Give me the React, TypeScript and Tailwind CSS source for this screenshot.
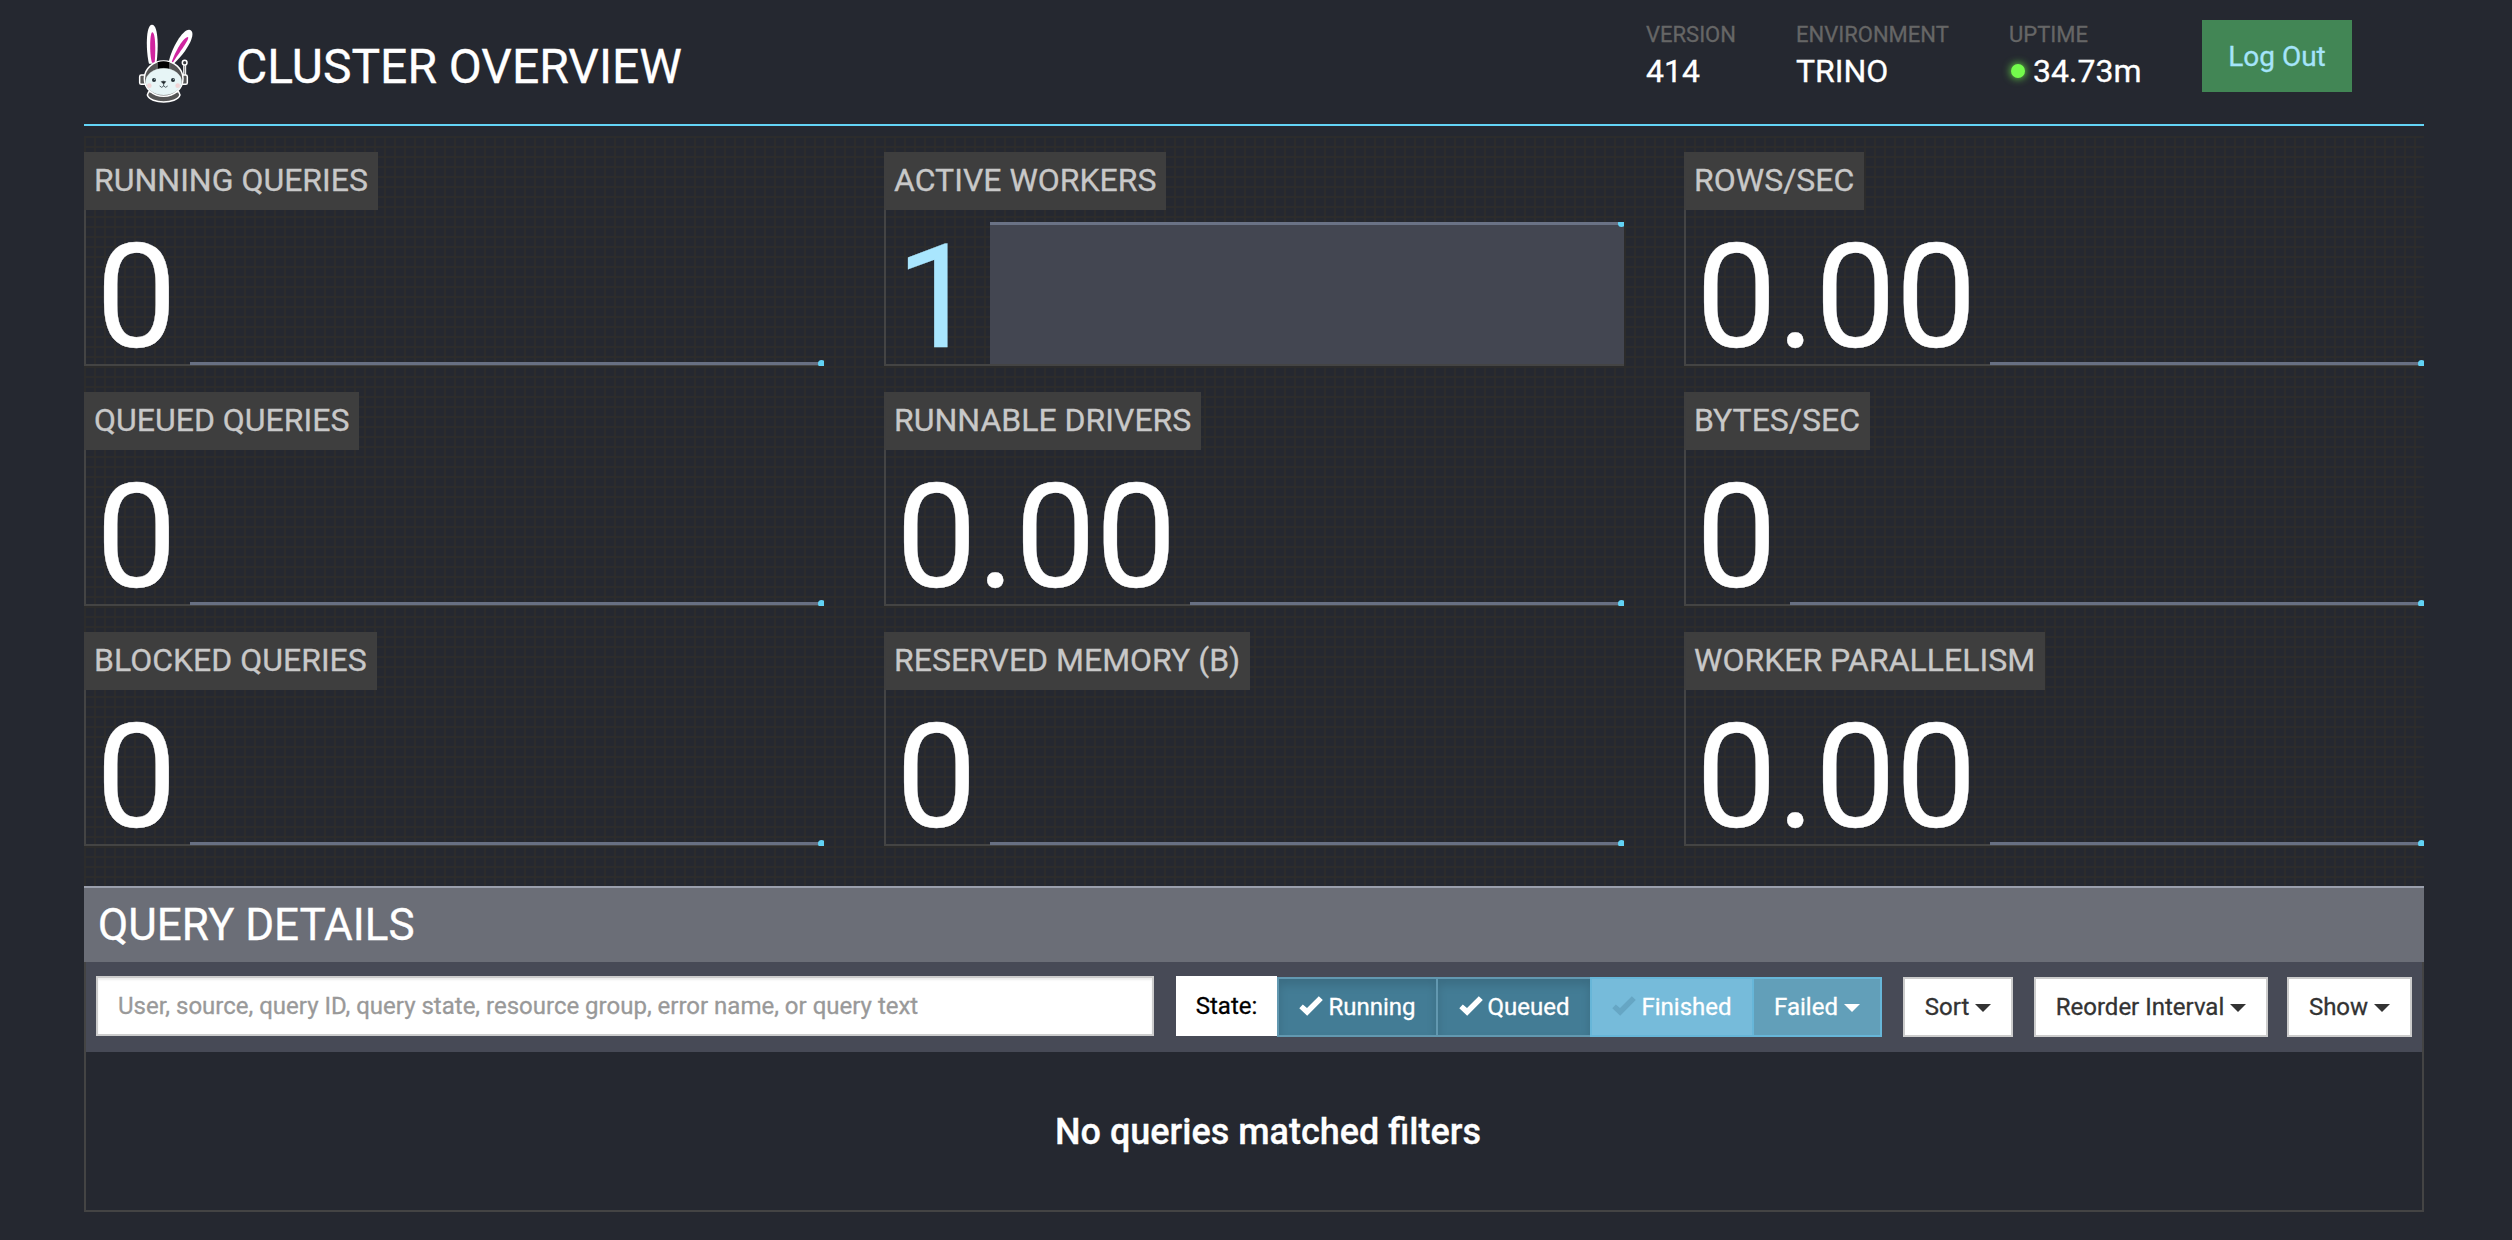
import React from "react";

type Stat = { label: string; value: string; full?: boolean };

const STATS: Stat[] = [
  { label: "RUNNING QUERIES", value: "0" },
  { label: "ACTIVE WORKERS", value: "1", full: true },
  { label: "ROWS/SEC", value: "0.00" },
  { label: "QUEUED QUERIES", value: "0" },
  { label: "RUNNABLE DRIVERS", value: "0.00" },
  { label: "BYTES/SEC", value: "0" },
  { label: "BLOCKED QUERIES", value: "0" },
  { label: "RESERVED MEMORY (B)", value: "0" },
  { label: "WORKER PARALLELISM", value: "0.00" },
];

function Logo() {
  return (
    <svg viewBox="0 0 210 285" className="h-[95px] w-[70px]" fill="none">
      <path d="M57 146C48 112 46 29 66 29C87 29 85 110 79 146Z" fill="#fff" />
      <path d="M66 143C58 120 59 52 67 52C77 52 77 112 74 143Z" fill="#d0259f" />
      <path d="M116 142C124 100 158 42 178 44C204 50 172 110 127 150Z" fill="#fff" />
      <path d="M125 142C136 110 160 66 174 66C180 72 148 112 128 144Z" fill="#d0259f" />
      <path d="M164 151V184" stroke="#fff" strokeWidth="9" />
      <path d="M164 151V184" stroke="#4a4a4a" strokeWidth="2" />
      <circle cx="164" cy="143" r="7" fill="#3a3b40" stroke="#fff" strokeWidth="4.5" />
      <rect x="29" y="180" width="18" height="28" rx="5" fill="#555" stroke="#fff" strokeWidth="4.5" />
      <rect x="154" y="180" width="18" height="28" rx="5" fill="#555" stroke="#fff" strokeWidth="4.5" />
      <path d="M56 230L52 240C62 268 140 268 150 240L146 230Z" fill="#555" stroke="#fff" strokeWidth="4.5" strokeLinejoin="round" />
      <ellipse cx="101" cy="191" rx="58" ry="53" fill="#555" stroke="#fff" strokeWidth="4.5" />
      <path d="M82 142Q100 136 119 142V164H82Z" fill="#000" />
      <path d="M82 141V162M119 141V162" stroke="#aaa" strokeWidth="1.5" />
      <ellipse cx="101" cy="200" rx="54" ry="40" fill="#e7f5f6" stroke="#dfe7e8" strokeWidth="1" />
      <circle cx="58" cy="212" r="7" fill="#f0d5d6" />
      <circle cx="143" cy="212" r="7" fill="#f0d5d6" />
      <circle cx="72" cy="195" r="6" fill="#263338" />
      <circle cx="129" cy="195" r="6" fill="#263338" />
      <circle cx="74" cy="193" r="1.8" fill="#a7babd" />
      <circle cx="131" cy="193" r="1.8" fill="#a7babd" />
      <path d="M94 200Q100 197 107 200L101 207Z" fill="#1d2529" stroke="#1d2529" strokeWidth="2" />
      <path d="M101 206V213M89 213Q95 221 101 213Q107 221 113 213" stroke="#39464a" strokeWidth="2.5" />
    </svg>
  );
}

function Caret() {
  return (
    <svg viewBox="0 0 16 8" className="mt-px h-2 w-4" fill="currentColor">
      <path d="M0 0H16L8 8Z" />
    </svg>
  );
}

function Check({ dim }: { dim?: boolean }) {
  return (
    <svg viewBox="0 0 24 20" className={dim ? "-mt-0.5 h-5 w-6 text-[#66a6c4]" : "-mt-0.5 h-5 w-6 text-white"} fill="currentColor">
      <path d="M0.3 12.2L3.8 8.4L8 12L19.8 0.3L23.8 4L8.2 19.8Z" />
    </svg>
  );
}

function Spark({ full }: { full?: boolean }) {
  return (
    <div className="relative mt-[12px] -mb-0.5 h-[144px] min-w-0 flex-1 overflow-hidden">
      {full ? (
        <div className="h-[142px] border-t-[3px] border-[#6a7285] bg-[#434651]" />
      ) : (
        <div className="flex h-full flex-col justify-end">
          <div className="mb-px h-[3px] bg-[#687083]" />
        </div>
      )}
      <div
        className={
          full
            ? "absolute -right-px -top-[2px] size-[7px] rounded-full bg-[#62d3f5]"
            : "absolute -right-px -bottom-[0.5px] size-[7px] rounded-full bg-[#62d3f5]"
        }
      />
    </div>
  );
}

function StatCard({ label, value, full }: Stat) {
  return (
    <div className="flex h-[214px] flex-col items-start">
      <div className="h-[58px] bg-[#3e3e3e] px-[10px] text-[32px] leading-[57px] whitespace-nowrap text-[#c8c8c8]">{label}</div>
      <div className="flex h-[156px] w-full border-b-2 border-l-2 border-[#444]">
        <div className={full ? "mr-[13px] pl-[10px] text-[144px] leading-[175px] text-[#a9e6fe]" : "mr-[13px] pl-[10px] text-[144px] leading-[175px] text-white"}>
          {value}
        </div>
        <Spark full={full} />
      </div>
    </div>
  );
}

function Meta({ label, children }: { label: string; children: React.ReactNode }) {
  return (
    <div className="flex flex-col">
      <div className="h-8 text-[22px] leading-[33px] text-[#666]">{label}</div>
      <div className="mt-[1px] flex h-10 items-center text-[32px] leading-10 text-white">{children}</div>
    </div>
  );
}

const menuButton = "flex h-[60px] items-center justify-center gap-[6px] border-2 border-[#ccc] bg-white text-[24px] text-[#333]";

export default function App() {
  return (
    <div className="h-[1240px] w-[2512px] overflow-hidden bg-[#252830] pl-[84px] font-[Roboto,sans-serif] [-webkit-text-stroke:0.3px]">
      <div className="w-[2340px]">
        <header className="flex h-[126px] border-b-2 border-[#63d4f6]">
          <div className="ml-[46px] mt-[15px]">
            <Logo />
          </div>
          <h1 className="mt-[37px] ml-[36px] w-[1410px] text-[48px] leading-[60px] text-white">CLUSTER OVERVIEW</h1>
          <div className="mt-[18px] flex">
            <div className="w-[150px]"><Meta label="VERSION">414</Meta></div>
            <div className="w-[213px]"><Meta label="ENVIRONMENT">TRINO</Meta></div>
            <div className="w-[193px]">
              <Meta label="UPTIME">
                <span className="mr-[8px] ml-[2px] size-[14px] rounded-full bg-[#74fb4c] shadow-[0_0_8px_#74fb4c]" />
                34.73m
              </Meta>
            </div>
          </div>
          <button className="mt-5 h-[72px] w-[150px] bg-[#428655] pt-px text-[28px] text-[#a5e4fa]">Log Out</button>
        </header>

        <section className="mt-[10px] grid h-[750px] grid-cols-[740px_740px_740px] content-start gap-x-[60px] gap-y-[26px] bg-[linear-gradient(to_right,#2c2c2c_2px,transparent_2px),linear-gradient(to_bottom,#2c2c2c_2px,transparent_2px)] bg-[size:10px_10px] pt-4">
          {STATS.map((s) => (
            <StatCard key={s.label} {...s} />
          ))}
        </section>

        <h2 className="h-[76px] border-t-2 border-[#9a9fac] bg-[#6b6e77] pl-[14px] text-[44px] leading-[74px] text-white">QUERY DETAILS</h2>

        <section className="h-[250px] border-x-2 border-b-2 border-[#444]">
          <div className="flex h-[90px] bg-[#474a56] pt-[14px] pl-[10px]">
            <input
              className="h-[60px] w-[1058px] border-2 border-[#ccc] bg-white pl-5 text-[24px] shadow-[inset_0_2px_2px_rgba(0,0,0,0.075)] placeholder:text-[#999]"
              placeholder="User, source, query ID, query state, resource group, error name, or query text"
            />
            <div className="ml-[22px] flex h-[60px] w-[101px] items-center justify-center bg-white text-[24px] text-black">State:</div>
            <div className="mt-px flex h-[60px] text-[24px] text-white">
              <button className="flex w-[161px] items-center justify-center gap-[5px] border-2 border-[#6298b0] bg-[#437c95] shadow-[inset_0_6px_10px_rgba(0,0,0,0.125)]"><Check />Running</button>
              <button className="flex w-[152px] items-center justify-center gap-[5px] border-y-2 border-[#6298b0] bg-[#437c95] shadow-[inset_0_6px_10px_rgba(0,0,0,0.125)]"><Check />Queued</button>
              <button className="flex w-[164px] items-center justify-center gap-[5px] border-2 border-[#67b6d8] bg-[#76bbda]"><Check dim />Finished</button>
              <button className="flex w-[128px] items-center justify-center gap-[6px] border-y-2 border-r-2 border-[#67b6d8] bg-[#629fb9]">Failed<Caret /></button>
            </div>
            <div className="mt-px ml-[21px] w-[110px]"><button className={menuButton + " w-[110px]"}>Sort<Caret /></button></div>
            <div className="mt-px ml-[21px] w-[234px]"><button className={menuButton + " w-[234px]"}>Reorder Interval<Caret /></button></div>
            <div className="mt-px ml-[19px] w-[125px]"><button className={menuButton + " w-[125px]"}>Show<Caret /></button></div>
          </div>
          <div className="flex h-[158px] items-center justify-center pt-[2px] pl-[28px] text-[36px] font-medium text-white">No queries matched filters</div>
        </section>
      </div>
    </div>
  );
}
